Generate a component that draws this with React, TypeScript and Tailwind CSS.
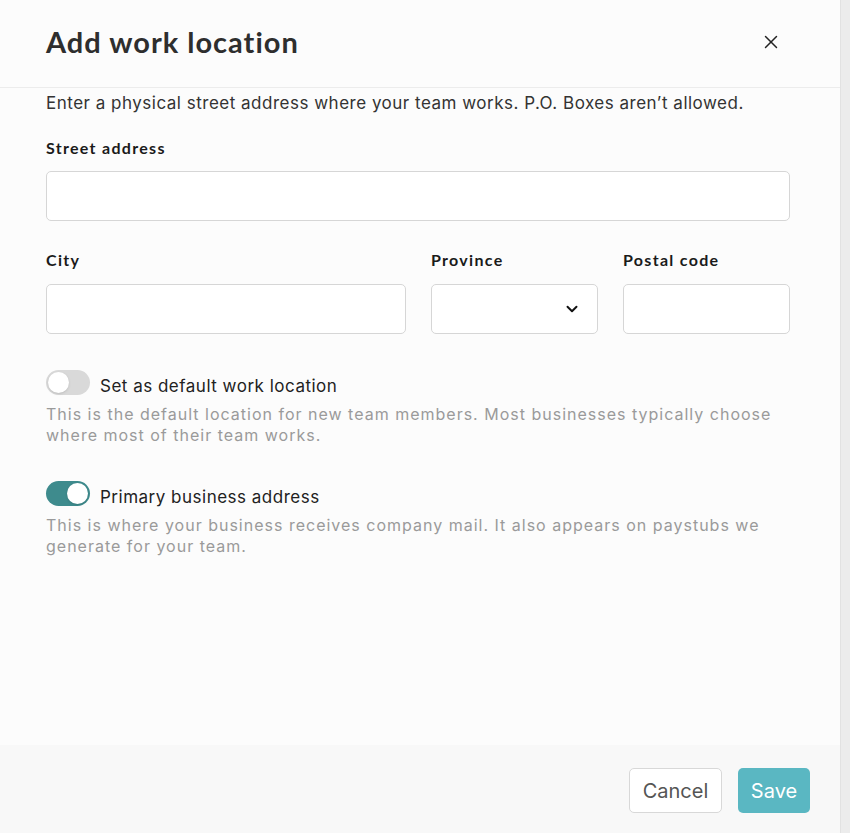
import React, { useState } from "react";
import { X, ChevronDown } from "lucide-react";

const Toggle = ({ on, onClick }: { on: boolean; onClick: () => void }) => (
  <button
    onClick={onClick}
    className={`relative h-[25px] w-[44px] shrink-0 rounded-full ${on ? "bg-[#3e8b8d]" : "bg-[#d9d9d9]"}`}
  >
    <span
      className={`absolute top-[2px] h-[21px] w-[21px] rounded-full bg-white shadow-sm ${on ? "left-[21px]" : "left-[2px]"}`}
    />
  </button>
);

const Label = ({ children }: { children: React.ReactNode }) => (
  <label className="block font-['Lato'] text-[16px] font-bold tracking-[1.3px] text-[#1a1a1a]">{children}</label>
);

const App = () => {
  const [isDefault, setIsDefault] = useState(false);
  const [isPrimary, setIsPrimary] = useState(true);

  return (
    <div className="flex h-[833px] w-[850px] bg-[#ececec] font-['Inter',sans-serif]">
      <div className="flex w-[841px] flex-col border-r border-[#e2e2e2] bg-[#fcfcfc]">
        {/* Header */}
        <div className="flex h-[88px] items-center justify-between border-b border-[#ececec] pb-[4px] pl-[46px] pr-[58px]">
          <h1 className="font-['Lato'] text-[29px] font-bold tracking-[1px] text-[#2e2e2e]">Add work location</h1>
          <X size={22} strokeWidth={1.6} className="text-[#222]" />
        </div>

        {/* Body */}
        <div className="flex-1 pl-[46px] pr-[50px]">
          <p className="mt-[3px] text-[17px] leading-[24px] tracking-[0.5px] text-[#333]">
            Enter a physical street address where your team works. P.O. Boxes aren’t allowed.
          </p>

          <div className="mt-[21px]">
            <Label>Street address</Label>
            <input className="mt-[11px] h-[50px] w-full rounded-[5px] border border-[#d6d6d6] bg-white px-3" />
          </div>

          <div className="mt-[27px] flex gap-[25px]">
            <div className="w-[360px]">
              <Label>City</Label>
              <input className="mt-[12px] h-[50px] w-full rounded-[5px] border border-[#d6d6d6] bg-white px-3" />
            </div>
            <div className="w-[167px]">
              <Label>Province</Label>
              <div className="mt-[12px] flex h-[50px] w-full items-center justify-end rounded-[5px] border border-[#d6d6d6] bg-white pr-[16px]">
                <ChevronDown size={18} strokeWidth={2.6} className="text-[#111]" />
              </div>
            </div>
            <div className="w-[167px]">
              <Label>Postal code</Label>
              <input className="mt-[12px] h-[50px] w-full rounded-[5px] border border-[#d6d6d6] bg-white px-3" />
            </div>
          </div>

          <div className="mt-[36px]">
            <div className="flex items-start gap-[10px]">
              <Toggle on={isDefault} onClick={() => setIsDefault(!isDefault)} />
              <span className="mt-[4px] text-[17px] leading-[25px] tracking-[0.5px] text-[#222]">
                Set as default work location
              </span>
            </div>
            <p className="mt-[5px] text-[16px] leading-[21px] tracking-[1px] text-[#9a9a9a]">
              This is the default location for new team members. Most businesses typically choose where most of their team works.
            </p>
          </div>

          <div className="mt-[35px]">
            <div className="flex items-start gap-[10px]">
              <Toggle on={isPrimary} onClick={() => setIsPrimary(!isPrimary)} />
              <span className="mt-[4px] text-[17px] leading-[25px] tracking-[0.5px] text-[#222]">
                Primary business address
              </span>
            </div>
            <p className="mt-[5px] text-[16px] leading-[21px] tracking-[1px] text-[#9a9a9a]">
              This is where your business receives company mail. It also appears on paystubs we generate for your team.
            </p>
          </div>
        </div>

        {/* Footer */}
        <div className="flex h-[88px] items-start justify-end gap-[16px] bg-[#f8f8f8] pr-[30px] pt-[23px]">
          <button className="h-[45px] w-[93px] rounded-[5px] border border-[#d8d8d8] bg-white text-[20px] text-[#555]">
            Cancel
          </button>
          <button className="h-[45px] w-[72px] rounded-[5px] bg-[#5ab7c2] text-[20px] text-white">Save</button>
        </div>
      </div>
    </div>
  );
};

export default App;
